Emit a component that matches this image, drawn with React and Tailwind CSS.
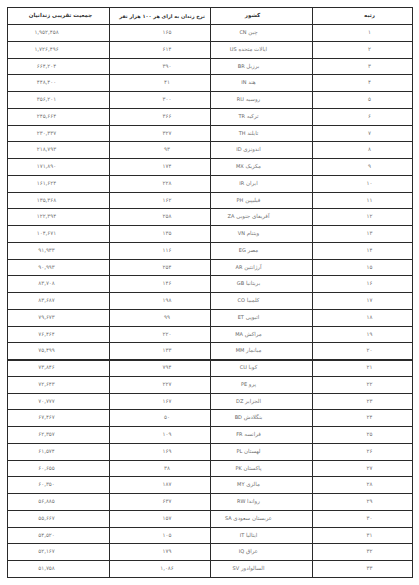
const rows = [
  ['۱', 'چین', 'CN', '۱۶۵', '۱,۹۵۲,۴۵۸'],
  ['۲', 'ایالات متحده', 'US', '۶۱۴', '۱,۷۲۶,۴۹۶'],
  ['۳', 'برزیل', 'BR', '۳۹۰', '۶۶۴,۲۰۴'],
  ['۴', 'هند', 'IN', '۴۱', '۴۴۸,۴۰۰'],
  ['۵', 'روسیه', 'RU', '۳۰۰', '۳۵۶,۲۰۱'],
  ['۶', 'ترکیه', 'TR', '۳۶۶', '۲۴۵,۶۶۴'],
  ['۷', 'تایلند', 'TH', '۳۲۷', '۲۳۰,۳۳۷'],
  ['۸', 'اندونزی', 'ID', '۹۳', '۲۱۸,۷۹۳'],
  ['۹', 'مکزیک', 'MX', '۱۷۴', '۱۷۱,۸۹۰'],
  ['۱۰', 'ایران', 'IR', '۲۲۸', '۱۶۱,۶۲۴'],
  ['۱۱', 'فیلیپین', 'PH', '۱۶۲', '۱۳۵,۳۶۸'],
  ['۱۲', 'آفریقای جنوبی', 'ZA', '۲۵۸', '۱۲۲,۳۹۴'],
  ['۱۳', 'ویتنام', 'VN', '۱۳۵', '۱۰۴,۶۷۱'],
  ['۱۴', 'مصر', 'EG', '۱۱۶', '۹۱,۹۳۳'],
  ['۱۵', 'آرژانتین', 'AR', '۲۵۴', '۹۰,۹۹۳'],
  ['۱۶', 'بریتانیا', 'GB', '۱۴۶', '۸۳,۷۰۸'],
  ['۱۷', 'کلمبیا', 'CO', '۱۹۸', '۸۳,۶۸۷'],
  ['۱۸', 'اتیوپی', 'ET', '۹۹', '۷۹,۶۷۳'],
  ['۱۹', 'مراکش', 'MA', '۲۲۰', '۷۶,۴۶۴'],
  ['۲۰', 'میانمار', 'MM', '۱۳۳', '۷۵,۴۹۹'],
  ['۲۱', 'کوبا', 'CU', '۷۹۴', '۷۳,۸۴۶'],
  ['۲۲', 'پرو', 'PE', '۲۲۷', '۷۲,۶۴۳'],
  ['۲۳', 'الجزایر', 'DZ', '۱۶۷', '۷۰,۷۷۷'],
  ['۲۴', 'بنگلادش', 'BD', '۵۰', '۶۷,۴۶۷'],
  ['۲۵', 'فرانسه', 'FR', '۱۰۹', '۶۲,۳۵۷'],
  ['۲۶', 'لهستان', 'PL', '۱۶۹', '۶۱,۵۷۴'],
  ['۲۷', 'پاکستان', 'PK', '۳۸', '۶۰,۶۵۵'],
  ['۲۸', 'مالزی', 'MY', '۱۸۷', '۶۰,۳۵۰'],
  ['۲۹', 'رواندا', 'RW', '۶۳۷', '۵۶,۸۸۵'],
  ['۳۰', 'عربستان سعودی', 'SA', '۱۵۷', '۵۵,۶۶۷'],
  ['۳۱', 'ایتالیا', 'IT', '۱۰۵', '۵۴,۵۲۰'],
  ['۳۲', 'عراق', 'IQ', '۱۷۹', '۵۲,۱۶۷'],
  ['۳۳', 'السالوادور', 'SV', '۱,۰۸۶', '۵۱,۷۵۸'],
];

export default function App() {
  return (
    <div className="min-h-[585px] w-[419px] bg-white pl-[7px] pt-[7px] font-['DejaVu_Sans',sans-serif]">
      <table dir="rtl" className="w-[405px] table-fixed border-collapse text-[5.5px] leading-none">
        <colgroup>
          <col className="w-[100px]" />
          <col className="w-[102px]" />
          <col className="w-[101px]" />
          <col className="w-[102px]" />
        </colgroup>
        <thead>
          <tr className="h-[17px] whitespace-nowrap text-[5.5px] text-[#333]">
            <th className="border border-[#2a2a2a] pl-[14px] text-center font-semibold">رتبه</th>
            <th className="border border-[#2a2a2a] pr-[18px] text-center font-semibold">کشور</th>
            <th className="border border-[#2a2a2a] pl-[4px] text-center text-[5px] font-semibold">نرخ زندان به ازای هر ۱۰۰ هزار نفر</th>
            <th className="border border-[#2a2a2a] pl-[4px] text-center font-semibold">جمعیت تقریبی زندانیان</th>
          </tr>
        </thead>
        <tbody className="text-[#777]">
          {rows.map((r, i) => (
            <tr key={r[0]} className={i === 20 ? 'h-[16.75px] border-t-2 border-[#2a2a2a]' : 'h-[16.75px]'}>
              <td className="border border-[#2a2a2a] pl-[14px] text-center">{r[0]}</td>
              <td className="whitespace-nowrap border border-[#2a2a2a] pr-[26px] text-center">
                {r[1]} <span className="text-[5px] text-[#666]">{r[2]}</span>
              </td>
              <td className="border border-[#2a2a2a] pl-[14px] text-center">{r[3]}</td>
              <td className="border border-[#2a2a2a] pr-[24px] text-center">{r[4]}</td>
            </tr>
          ))}
        </tbody>
      </table>
    </div>
  );
}
